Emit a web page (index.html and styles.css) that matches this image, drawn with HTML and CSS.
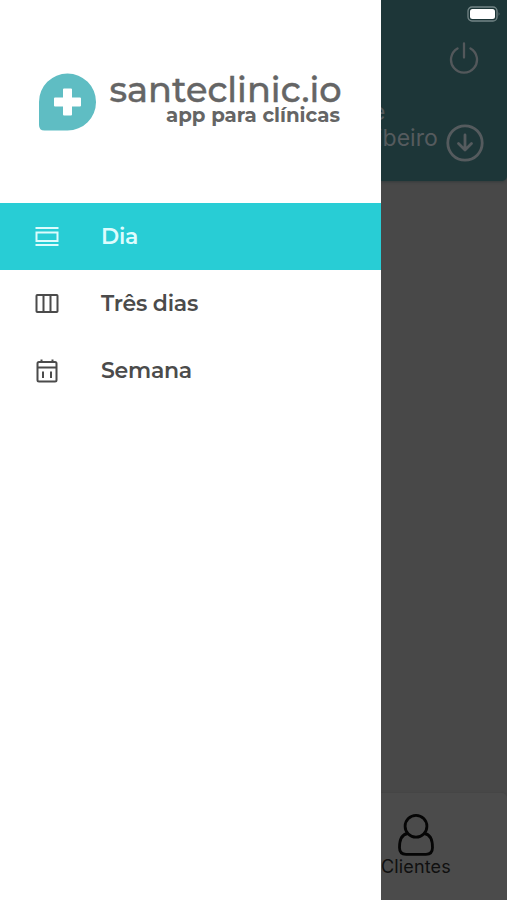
FILE: index.html
```html
<!DOCTYPE html>
<html lang="pt-BR">
<head>
<meta charset="utf-8">
<title>santeclinic.io</title>
<link rel="stylesheet" href="styles.css">
</head>
<body>
<div class="app">
  <aside class="drawer">
    <header class="brand">
      <svg class="brand-mark" viewBox="0 0 58 58">
        <path fill="#5fbdc3" d="M29 .5A28.5 28.5 0 1 1 29 57.5H6Q.5 57.500 .5 52V29A28.500 28.500 0 0 1 29 .5Z"/>
        <path fill="#fff" d="M25.500 15.500h7q1 0 1 1v8h8q1 0 1 1v7q0 1-1 1h-8v8q0 1-1 1h-7q-1 0-1-1v-8h-8q-1 0-1-1v-7q0-1 1-1h8v-8q0-1 1-1z"/>
      </svg>
      <svg class="brand-text" viewBox="0 0 236 60">
        <text class="brand-name" x="0.500" y="34.300" textLength="232" lengthAdjust="spacingAndGlyphs">santeclinic.io</text>
        <text class="brand-tag" x="57" y="53.500" textLength="174" lengthAdjust="spacingAndGlyphs">app para clínicas</text>
      </svg>
    </header>
    <nav class="menu">
      <a class="item active">
        <svg class="icon" viewBox="0 0 24 24"><path d="M.500 3h23M.500 20h23M1.500 7.500h21v8.500h-21z"/></svg>
        <span class="label">Dia</span>
      </a>
      <a class="item">
        <svg class="icon" viewBox="0 0 24 24"><rect x="1.500" y="3" width="21" height="17" rx=".8"/><path d="M8.500 3v17M15.500 3v17"/></svg>
        <span class="label">Três dias</span>
      </a>
      <a class="item">
        <svg class="icon" viewBox="0 0 24 24"><rect x="2.500" y="3" width="19" height="19.500" rx="1.500"/><path d="M2.500 8.500h19M6.500 .5v3M17.500 .5v3M8 12.500v6.500M16 12.500v6.500"/></svg>
        <span class="label">Semana</span>
      </a>
    </nav>
  </aside>
  <main class="screen">
    <header class="top">
      <svg class="battery" viewBox="0 0 34 16">
        <rect x="1" y="1" width="29" height="14" rx="4" fill="none" stroke="#738586" stroke-width="1.300"/>
        <rect x="3" y="3" width="25" height="10" rx="2.500" fill="#fff"/>
        <path d="M31.700 6v4q1.600-2 0-4" fill="#738586"/>
      </svg>
      <svg class="power" viewBox="0 0 30 32"><path d="M8.500 6.400a13 13 0 1 0 13 0M15 1.500v14"/></svg>
      <div class="user">
        <div class="name"><span>e</span><span class="surname">ibeiro</span></div>
        <svg class="down" viewBox="0 0 38 38"><circle cx="19" cy="19" r="17.200"/><path d="M19 11v15M12.500 19.500l6.500 6.500 6.500-6.500"/></svg>
      </div>
    </header>
    <section class="content"></section>
    <footer class="tabs">
      <svg class="person" viewBox="0 0 36 42"><path d="M9.500 19.500C3.500 20.500 1.500 27 1.500 33.500Q1.500 40.300 8 40.300H28Q34.500 40.300 34.500 33.500C34.500 27 32.500 20.500 26.500 19.500"/><circle cx="18" cy="12.300" r="10.900"/></svg>
      <span class="tab-label">Clientes</span>
    </footer>
  </main>
</div>
</body>
</html>
```
FILE: styles.css
```css
* { box-sizing: border-box; }
body { margin: 0; background: #484848; }
.app { display: flex; width: 507px; height: 900px; overflow: hidden; }
.drawer { width: 381px; flex: none; background: #fff; }
.brand { display: flex; height: 203px; padding: 73px 0 0 38px; }
.brand-mark { width: 59px; height: 58px; }
.brand-text { width: 236px; height: 60px; margin: -5px 0 0 12px; }
.brand-name, .brand-tag { font-family: Montserrat, Inter, sans-serif; fill: #656565; }
.brand-name { font-size: 35px; font-weight: 500; stroke: #656565; stroke-width: .4; }
.brand-tag { font-size: 20px; font-weight: 700; }
.item { display: flex; align-items: center; height: 67.3px; padding-left: 35px; color: #4b4b4b; }
.item.active { background: #28cdd5; color: #ddfcfd; }
.icon { width: 24px; height: 24px; fill: none; stroke: currentColor; stroke-width: 2; }
.label { margin-left: 42px; font: 600 22px/28px Montserrat, Inter, sans-serif; letter-spacing: -.25px; }
.screen { display: flex; flex-direction: column; width: 126px; overflow: hidden; background: #484848; }
.top { display: flex; flex-direction: column; align-items: flex-end; height: 181px; padding-top: 6px; background: #1d3638; border-bottom-right-radius: 5px; box-shadow: 0 1px 3px #333b3c; }
.battery { width: 34px; height: 16px; margin-right: 6px; }
.power { width: 30px; height: 32px; margin: 20px 28px 0 0; fill: none; stroke: #53585b; stroke-width: 2.3; stroke-linecap: round; }
.user { display: flex; align-items: flex-start; justify-content: flex-end; width: 126px; margin-top: 25px; padding-right: 23px; }
.name { display: flex; flex-direction: column; width: 62px; margin-right: 3px; color: #555b5e; font: 400 23px/26px Inter, sans-serif; }
.name span { margin-left: -9px; }
.name .surname { margin-left: -4px; }
.down { width: 38px; height: 38px; margin-top: 25px; flex: none; fill: none; stroke: #555b5e; stroke-width: 2.8; stroke-linecap: round; stroke-linejoin: round; }
.content { flex: 1; }
.tabs { height: 107px; padding-top: 21px; background: #4b4b4b; border-top-right-radius: 5px; box-shadow: 0 -1px 2px #444; }
.person { display: block; width: 36px; height: 42px; margin-left: 17px; fill: none; stroke: #050505; stroke-width: 2.8; }
.tab-label { display: block; color: #101010; font: 400 18px/22px Inter, sans-serif; letter-spacing: .15px; }
```
